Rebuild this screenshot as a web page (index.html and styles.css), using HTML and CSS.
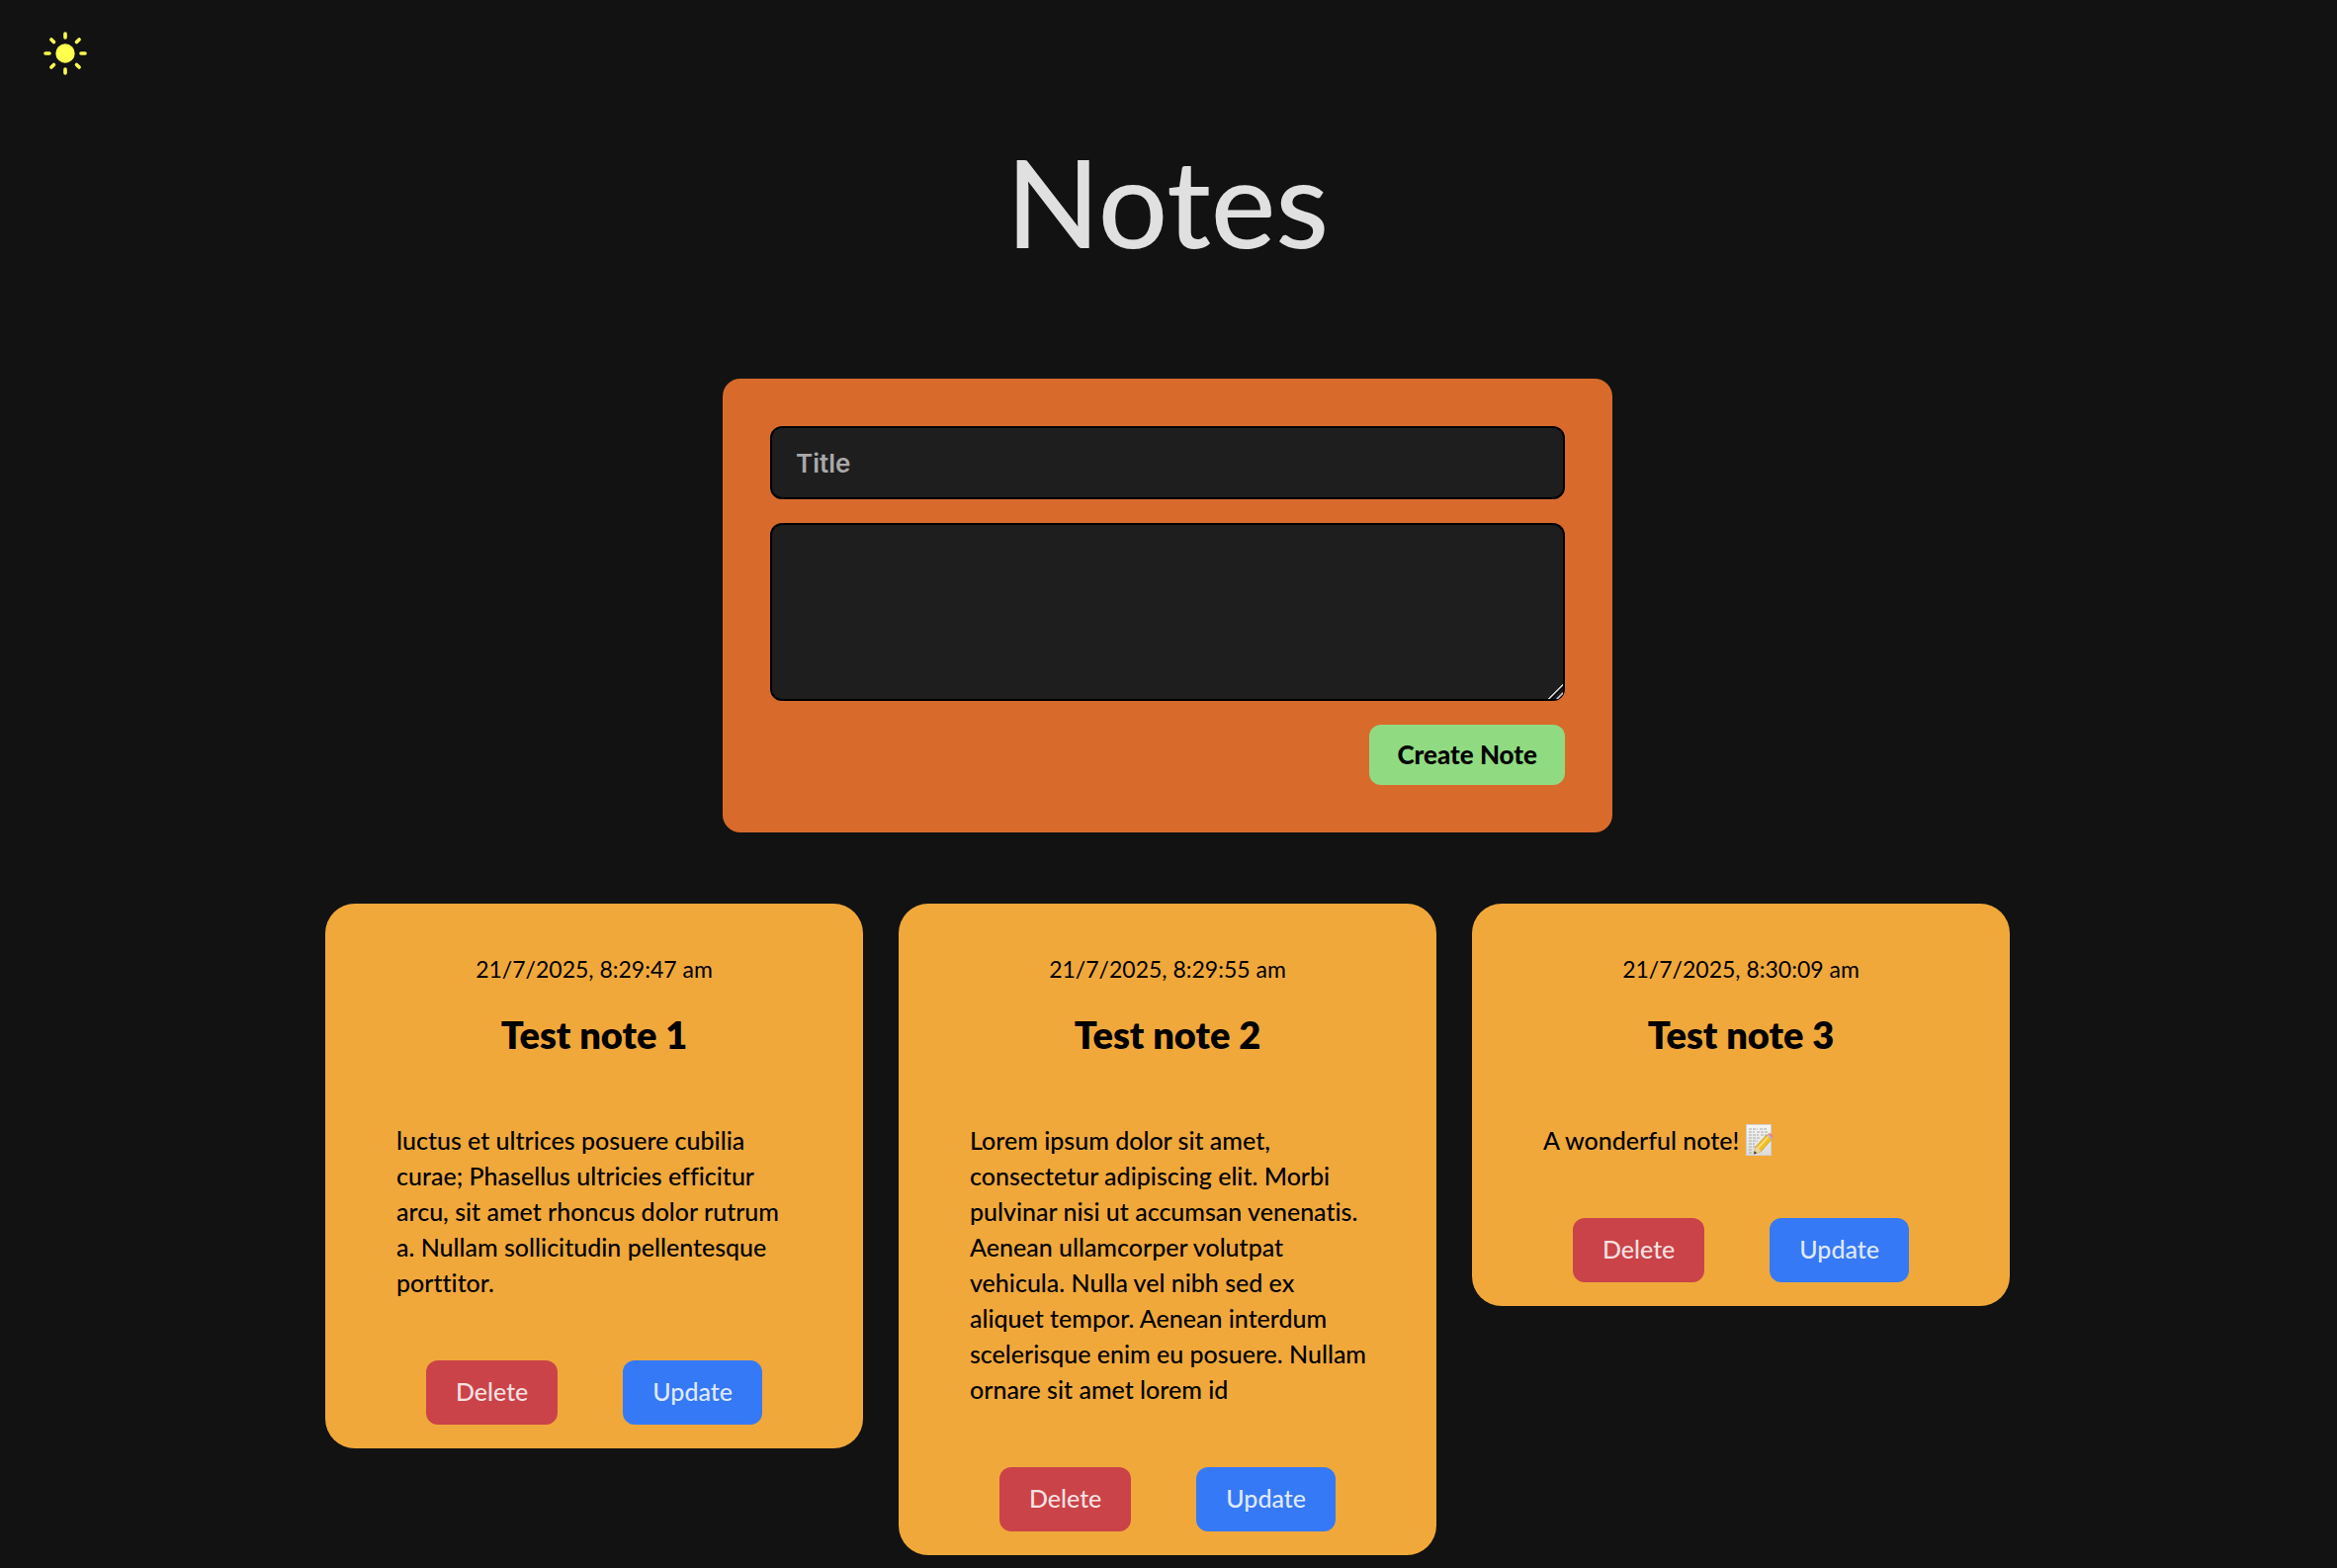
FILE: index.html
```html
<!DOCTYPE html>
<html lang="en">
<head>
<meta charset="utf-8">
<meta name="viewport" content="width=device-width, initial-scale=1">
<title>Notes</title>
<link rel="stylesheet" href="styles.css">
</head>
<body>
<header class="topbar">
  <button class="theme-toggle" type="button" aria-label="Toggle theme">
    <svg class="sun" viewBox="0 0 44 44" aria-hidden="true">
      <circle cx="22" cy="22" r="9.7" fill="currentColor"/>
      <path d="M22 2v4M22 38v4M2 22h4M38 22h4M7.9 7.9l2.6 2.6M33.5 33.5l2.6 2.6M7.9 36.1l2.6-2.6M33.5 10.5l2.6-2.6" fill="none" stroke="currentColor" stroke-width="3.6" stroke-linecap="round"/>
    </svg>
  </button>
</header>
<main class="page">
  <h1 class="page-title">Notes</h1>
  <form class="note-form">
    <input class="field field-title" type="text" placeholder="Title" aria-label="Title">
    <textarea class="field field-body" aria-label="Content"></textarea>
    <button class="button button-create" type="button">Create Note</button>
  </form>
  <section class="notes" aria-label="Notes">
    <article class="note">
      <time class="note-date">21/7/2025, 8:29:47 am</time>
      <h2 class="note-title">Test note 1</h2>
      <p class="note-text">luctus et ultrices posuere cubilia curae; Phasellus ultricies efficitur arcu, sit amet rhoncus dolor rutrum a. Nullam sollicitudin pellentesque porttitor.</p>
      <div class="note-actions">
        <button class="button button-delete" type="button">Delete</button>
        <button class="button button-update" type="button">Update</button>
      </div>
    </article>
    <article class="note">
      <time class="note-date">21/7/2025, 8:29:55 am</time>
      <h2 class="note-title">Test note 2</h2>
      <p class="note-text">Lorem ipsum dolor sit amet, consectetur adipiscing elit. Morbi pulvinar nisi ut accumsan venenatis. Aenean ullamcorper volutpat vehicula. Nulla vel nibh sed ex aliquet tempor. Aenean interdum scelerisque enim eu posuere. Nullam ornare sit amet lorem id</p>
      <div class="note-actions">
        <button class="button button-delete" type="button">Delete</button>
        <button class="button button-update" type="button">Update</button>
      </div>
    </article>
    <article class="note">
      <time class="note-date">21/7/2025, 8:30:09 am</time>
      <h2 class="note-title">Test note 3</h2>
      <p class="note-text">A wonderful note!
        <svg class="memo" viewBox="0 0 28 32" role="img" aria-label="memo">
          <defs>
            <linearGradient id="sheet" x1="0" y1="0" x2="0" y2="1"><stop offset="0" stop-color="#f6f6f4"/><stop offset="1" stop-color="#dcdcda"/></linearGradient>
          </defs>
          <rect x="0.5" y="0.5" width="25" height="31" fill="url(#sheet)" stroke="#d2cfc8"/>
          <path d="M3 5h9M14 5h8M3 8h6M11 8h12M3 11h10M15 11h6M3 14h12M3 17h9M3 20h6M3 23h7M3 26h4M3 29h4" stroke="#a9a9a9" stroke-width="1" stroke-dasharray="3 1"/>
          <path d="M8 30l2-7L21 11l5 4.500L15 28z" fill="#f2bf2c" stroke="#b98718" stroke-width=".6"/>
          <path d="M11.500 25L23 12.500" stroke="#ffe27a" stroke-width="1.500"/>
          <path d="M8 30l2-7c2 .5 4.500 2.500 5 5z" fill="#ecd3a0"/>
          <path d="M8 30.500l.8-3.200 2.400 2z" fill="#333"/>
          <path d="M21 11l1-1 5 4.500-1 1z" fill="#b5bcc2"/>
          <path d="M22 10c1.500-1.500 3-.8 4.200.3S28.300 13 27 14.500z" fill="#e8848c"/>
        </svg>
      </p>
      <div class="note-actions">
        <button class="button button-delete" type="button">Delete</button>
        <button class="button button-update" type="button">Update</button>
      </div>
    </article>
  </section>
</main>
</body>
</html>
```
FILE: styles.css
```css
*, *::before, *::after {
  box-sizing: border-box;
}

body {
  margin: 0;
  background: #121212;
  color: #e0e0e0;
  font-family: "Avenir Next", Avenir, Lato, sans-serif;
  font-size: 25px;
  line-height: 36px;
  font-weight: 500;
  font-variant-ligatures: none;
}

h1, h2, p {
  margin: 0;
}

.topbar {
  display: flex;
  padding: 32px 44px;
}

.theme-toggle {
  display: flex;
  padding: 0;
  border: 0;
  background: none;
  color: #ffff4d;
  cursor: pointer;
}

.sun {
  width: 44px;
  height: 44px;
}

.page {
  display: flex;
  flex-direction: column;
  align-items: center;
  padding: 0 26px 12px 24px;
}

.page-title {
  padding: 15px 0 100px;
  font-size: 124px;
  line-height: 160px;
  font-weight: 500;
}

.note-form {
  display: flex;
  flex-direction: column;
  gap: 24px;
  width: 100%;
  max-width: 900px;
  padding: 48px;
  border-radius: 18px;
  background: #d86b2c;
}

.field {
  display: block;
  width: 100%;
  border: 2px solid #000;
  border-radius: 12px;
  background: #1e1e1e;
  color: #e0e0e0;
  font: 600 26px/36px Inter, sans-serif;
  padding: 18px 24px 16px;
}

.field::placeholder {
  color: #a9a9a9;
  opacity: 1;
}

.field-body {
  height: 180px;
  resize: vertical;
}

.field-body::-webkit-resizer {
  background: linear-gradient(135deg, transparent 49%, #c8c8c8 50% 56%, #000 57% 63%, transparent 64% 76%, #c8c8c8 77% 83%, transparent 84%);
}

.button {
  border: 0;
  border-radius: 12px;
  font: inherit;
  white-space: nowrap;
  cursor: pointer;
}

.button-create {
  align-self: flex-end;
  padding: 12px 28px 13px;
  background: #90db82;
  color: #000;
  font-size: 26px;
  font-weight: 900;
}

.notes {
  display: flex;
  flex-wrap: wrap;
  justify-content: center;
  align-items: flex-start;
  gap: 36px;
  width: 100%;
  padding-top: 72px;
}

.note {
  width: 544px;
  padding: 48px 36px 24px;
  border-radius: 30px;
  background: #f0a83b;
  color: #000;
}

.note-date {
  display: block;
  text-align: center;
  font-size: 23px;
  font-weight: 400;
}

.note-title {
  padding: 21px 0 27px;
  font-size: 38px;
  line-height: 54px;
  font-weight: 800;
  text-align: center;
}

.note-text {
  padding: 35px 32px 61px 36px;
}

.memo {
  width: 28px;
  height: 32px;
  margin-top: -4px;
  vertical-align: -6px;
}

.note-actions {
  display: flex;
  justify-content: space-evenly;
}

.button-delete,
.button-update {
  padding: 13px 30px 16px;
  color: rgba(255, 255, 255, 0.85);
}

.button-delete {
  background: #ca4348;
}

.button-update {
  background: #3679f6;
}
```
